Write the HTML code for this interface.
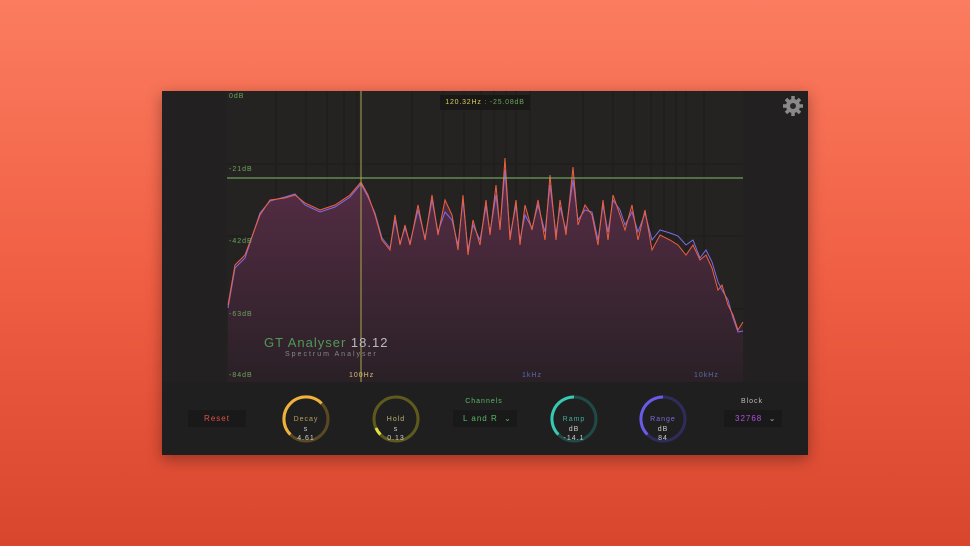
<!DOCTYPE html>
<html><head><meta charset="utf-8"><style>
html,body{margin:0;padding:0}
body{width:970px;height:546px;background:linear-gradient(#fb7c60,#f05f44 50%,#d8462e);position:relative;overflow:hidden;font-family:"Liberation Sans",sans-serif}
#p{position:absolute;left:162px;top:91px;width:646px;height:364px;background:#222020;box-shadow:0 4px 14px rgba(0,0,0,.35)}
.t{position:absolute;font-size:7px;letter-spacing:1px}
.k{position:absolute;font-size:7px;letter-spacing:1px;color:#ccc;text-align:center;width:60px}
</style></head><body>
<div id="p">
<svg width="646" height="364" style="position:absolute;left:0;top:0">
<defs><linearGradient id="f" x1="0" y1="0" x2="0" y2="1"><stop offset="0" stop-color="#5a2e48"/><stop offset="1" stop-color="#2a2026"/></linearGradient></defs>
<rect x="65" y="0" width="516" height="291" fill="#252222"/>
<g stroke="#1d1b1b" stroke-width="1">
<line x1="114" y1="0" x2="114" y2="291"/><line x1="144" y1="0" x2="144" y2="291"/><line x1="165" y1="0" x2="165" y2="291"/><line x1="182" y1="0" x2="182" y2="291"/><line x1="195" y1="0" x2="195" y2="291"/>
<line x1="250" y1="0" x2="250" y2="291"/><line x1="281" y1="0" x2="281" y2="291"/><line x1="302" y1="0" x2="302" y2="291"/><line x1="319" y1="0" x2="319" y2="291"/><line x1="332" y1="0" x2="332" y2="291"/><line x1="344" y1="0" x2="344" y2="291"/><line x1="354" y1="0" x2="354" y2="291"/><line x1="368" y1="0" x2="368" y2="291"/>
<line x1="421" y1="0" x2="421" y2="291"/><line x1="451" y1="0" x2="451" y2="291"/><line x1="472" y1="0" x2="472" y2="291"/><line x1="489" y1="0" x2="489" y2="291"/><line x1="502" y1="0" x2="502" y2="291"/><line x1="514" y1="0" x2="514" y2="291"/><line x1="524" y1="0" x2="524" y2="291"/><line x1="542" y1="0" x2="542" y2="291"/>
<line x1="65" y1="73" x2="581" y2="73"/><line x1="65" y1="145" x2="581" y2="145"/><line x1="65" y1="218" x2="581" y2="218"/>
</g>
<g transform="translate(-162,-91)">
<path fill="url(#f)" d="M228,305 L235,265 245,255 260,215 270,200 285,198 295,195 305,203 320,210 335,205 350,195 361,182 368,195 375,215 382,240 390,250 395,215 400,245 405,225 410,245 418,205 425,240 432,195 438,235 445,200 452,215 458,250 463,195 468,255 473,220 480,245 486,200 490,235 496,185 500,230 505,158 510,240 516,200 520,245 525,205 532,230 538,200 545,240 550,175 556,240 560,200 566,235 573,167 578,225 585,205 592,215 598,245 603,200 608,240 613,195 620,215 625,230 632,205 638,240 645,210 652,250 660,235 670,240 678,245 686,255 693,245 700,260 706,255 712,268 718,290 722,285 728,305 733,315 738,330 743,322 L743,382 228,382Z"/>
<polyline fill="none" stroke="#7a6ee8" stroke-width="1" points="228,308 235,268 245,258 260,213 270,201 285,197 295,194 305,205 320,212 335,207 350,197 361,184 368,197 375,213 382,238 390,248 395,220 400,243 405,228 410,243 418,210 425,238 432,200 438,232 445,212 452,220 458,245 463,200 468,250 473,225 480,240 486,206 490,232 496,195 500,228 505,170 510,236 516,205 520,240 525,215 532,228 538,205 545,232 550,185 556,234 560,207 566,230 573,180 578,220 585,210 592,212 598,240 603,205 608,232 613,200 620,210 625,225 632,212 638,232 645,213 652,240 660,230 670,233 678,236 686,245 693,240 700,258 706,250 712,262 718,282 722,290 728,300 733,318 738,332 743,331"/>
<polyline fill="none" stroke="#f0603e" stroke-width="1" points="228,305 235,265 245,255 260,215 270,200 285,198 295,195 305,203 320,210 335,205 350,195 361,182 368,195 375,215 382,240 390,250 395,215 400,245 405,225 410,245 418,205 425,240 432,195 438,235 445,200 452,215 458,250 463,195 468,255 473,220 480,245 486,200 490,235 496,185 500,230 505,158 510,240 516,200 520,245 525,205 532,230 538,200 545,240 550,175 556,240 560,200 566,235 573,167 578,225 585,205 592,215 598,245 603,200 608,240 613,195 620,215 625,230 632,205 638,240 645,210 652,250 660,235 670,240 678,245 686,255 693,245 700,260 706,255 712,268 718,290 722,285 728,305 733,315 738,330 743,322"/>
</g>
<line x1="65" y1="87" x2="581" y2="87" stroke="#7fbf6a" stroke-width="1"/>
<line x1="199" y1="0" x2="199" y2="291" stroke="#a9a84a" stroke-width="1"/>
<rect x="0" y="291" width="646" height="73" fill="#201f1f"/>
<g transform="translate(631,15)" fill="#8a8888">
<circle r="7"/>
<g stroke="#8a8888" stroke-width="3.5"><line x1="0" y1="-10" x2="0" y2="10"/><line x1="-10" y1="0" x2="10" y2="0"/><line x1="-7" y1="-7" x2="7" y2="7"/><line x1="-7" y1="7" x2="7" y2="-7"/></g>
<circle r="3" fill="#2a2727"/>
</g>
<g fill="none" stroke-width="3">
<circle cx="144" cy="328" r="22" stroke="#5a4a22"/>
<path d="M128.4,343.6 A22,22 0 1 1 159.6,312.4" stroke="#f0b23a"/>
<circle cx="234" cy="328" r="22" stroke="#5e5a1e"/>
<path d="M218.4,343.6 A22,22 0 0 1 214,337" stroke="#e4e040"/>
<circle cx="412" cy="328" r="22" stroke="#1f4a45"/>
<path d="M396.4,343.6 A22,22 0 0 1 412,306" stroke="#38c9b4"/>
<circle cx="501" cy="328" r="22" stroke="#2f2c5c"/>
<path d="M485.4,343.6 A22,22 0 0 1 501,306" stroke="#6a5ae8"/>
</g>
</svg>
<div class="t" style="left:67px;top:2px;color:#6aa65a">0dB</div>
<div class="t" style="left:67px;top:75px;color:#6aa65a">-21dB</div>
<div class="t" style="left:67px;top:147px;color:#6aa65a">-42dB</div>
<div class="t" style="left:67px;top:220px;color:#6aa65a">-63dB</div>
<div class="t" style="left:67px;top:281px;color:#6aa65a">-84dB</div>
<div class="t" style="left:187px;top:281px;color:#d8c070">100Hz</div>
<div class="t" style="left:360px;top:281px;color:#5a6aa8">1kHz</div>
<div class="t" style="left:532px;top:281px;color:#5a6aa8">10kHz</div>
<div style="position:absolute;left:278px;top:4px;width:90px;height:15px;background:#191817;font-size:7px;letter-spacing:.8px;line-height:15px;text-align:center;color:#d8d060">120.32Hz <span style="color:#6aa65a">: -25.08dB</span></div>
<div style="position:absolute;left:102px;top:244px;font-size:13px;letter-spacing:1px;color:#4f9a58">GT Analyser <span style="color:#bbb">18.12</span></div>
<div class="t" style="left:123px;top:260px;color:#888;letter-spacing:2px">Spectrum Analyser</div>
<div style="position:absolute;left:26px;top:319px;width:58px;height:17px;background:#1a1919;color:#e0504a;font-size:8px;letter-spacing:1px;text-align:center;line-height:17px">Reset</div>
<div class="k" style="left:114px;top:325px;color:#b89a60">Decay</div><div class="k" style="left:114px;top:335px">s</div><div class="k" style="left:114px;top:344px">4.61</div>
<div class="k" style="left:204px;top:325px;color:#b8b070">Hold</div><div class="k" style="left:204px;top:335px">s</div><div class="k" style="left:204px;top:344px">0.13</div>
<div class="k" style="left:382px;top:325px;color:#40a898">Ramp</div><div class="k" style="left:382px;top:335px">dB</div><div class="k" style="left:382px;top:344px">-14.1</div>
<div class="k" style="left:471px;top:325px;color:#7a6ad8">Range</div><div class="k" style="left:471px;top:335px">dB</div><div class="k" style="left:471px;top:344px">84</div>
<div class="k" style="left:292px;top:307px;color:#5ab868">Channels</div>
<div style="position:absolute;left:291px;top:319px;width:64px;height:17px;background:#1a1919;color:#5ab868;font-size:8px;letter-spacing:1px;line-height:17px;padding-left:10px;box-sizing:border-box">L and R &nbsp;⌄</div>
<div class="k" style="left:560px;top:307px;color:#bbb">Block</div>
<div style="position:absolute;left:562px;top:319px;width:58px;height:17px;background:#1a1919;color:#b050e0;font-size:8px;letter-spacing:1px;line-height:17px;padding-left:11px;box-sizing:border-box">32768 <span style="color:#aaa">&nbsp;⌄</span></div>
</div>
</body></html>
